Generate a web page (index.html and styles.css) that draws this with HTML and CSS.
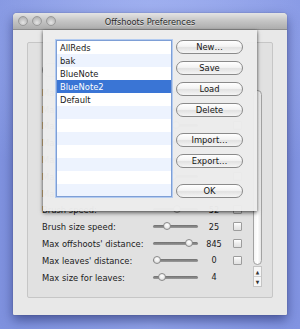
FILE: index.html
```html
<!DOCTYPE html>
<html>
<head>
<meta charset="utf-8">
<link rel="stylesheet" href="styles.css">
</head>
<body>
<div class="window">
  <div class="titlebar">
    <div class="lights"><span></span><span></span><span></span></div>
    <div class="title">Offshoots Preferences</div>
    <div></div>
  </div>
  <div class="content">
    <div class="group">
      <div class="rows">
        <div class="toprow"><span class="popup"></span></div>
        <div class="row"><span class="label">Max</span><span class="slider"><i style="left:60%"></i></span><span class="val"></span><span class="check"></span></div>
        <div class="row"><span class="label">Max</span><span class="slider"><i style="left:20%"></i></span><span class="val"></span><span class="check"></span></div>
        <div class="row"><span class="label">Max</span><span class="slider"><i style="left:50%"></i></span><span class="val"></span><span class="check"></span></div>
        <div class="row"><span class="label">Max</span><span class="slider"><i style="left:35%"></i></span><span class="val"></span><span class="check"></span></div>
        <div class="row"><span class="label">Max</span><span class="slider"><i style="left:15%"></i></span><span class="val"></span><span class="check"></span></div>
        <div class="row"><span class="label">Max</span><span class="slider"><i style="left:45%"></i></span><span class="val"></span><span class="check"></span></div>
        <div class="row"><span class="label">Max</span><span class="slider"><i style="left:30%"></i></span><span class="val"></span><span class="check"></span></div>
        <div class="row"><span class="label">Brush speed:</span><span class="slider"><i style="left:53%"></i></span><span class="val">52</span><span class="check"></span></div>
        <div class="row"><span class="label">Brush size speed:</span><span class="slider"><i style="left:31%"></i></span><span class="val">25</span><span class="check"></span></div>
        <div class="row"><span class="label">Max offshoots' distance:</span><span class="slider"><i style="left:80%"></i></span><span class="val">845</span><span class="check"></span></div>
        <div class="row"><span class="label">Max leaves' distance:</span><span class="slider"><i style="left:9%"></i></span><span class="val">0</span><span class="check"></span></div>
        <div class="row"><span class="label">Max size for leaves:</span><span class="slider"><i style="left:20%"></i></span><span class="val">4</span></div>
      </div>
      <div class="scroller">
        <div class="thumb"></div>
        <div class="arrows"><span>&#9650;</span><span>&#9660;</span></div>
      </div>
    </div>
  </div>
  <div class="sheet">
    <div class="list">
      <div class="item">AllReds</div>
      <div class="item">bak</div>
      <div class="item">BlueNote</div>
      <div class="item selected">BlueNote2</div>
      <div class="item">Default</div>
      <div class="item"></div>
      <div class="item"></div>
      <div class="item"></div>
      <div class="item"></div>
      <div class="item"></div>
      <div class="item"></div>
      <div class="item"></div>
    </div>
    <div class="buttons">
      <div class="btn">New…</div>
      <div class="btn">Save</div>
      <div class="btn">Load</div>
      <div class="btn">Delete</div>
      <div class="btn gap">Import…</div>
      <div class="btn">Export…</div>
      <div class="btn gap">OK</div>
    </div>
  </div>
</div>
</body>
</html>
```
FILE: styles.css
```css
html, body {
  margin: 0;
  padding: 0;
}
body {
  width: 300px;
  height: 329px;
  overflow: hidden;
  font-family: "DejaVu Sans Condensed", "DejaVu Sans", sans-serif;
  font-stretch: condensed;
  color: #1a1a1a;
  background:
    radial-gradient(ellipse 220px 160px at 150px 40px, rgba(170,185,245,0.7), rgba(170,185,245,0) 100%),
    linear-gradient(to right, #7f92df, #90a2e8 50%, #8294e2);
}
.window {
  position: relative;
  margin: 13px 0 0 13px;
  width: 274px;
  height: 302px;
  background: #e8e8e8;
  border-radius: 4px 4px 1px 1px;
  box-shadow: 0 5px 12px rgba(20, 30, 90, 0.55), 0 0 1px rgba(0,0,0,0.5);
}
.titlebar {
  height: 16px;
  border-bottom: 1px solid #8f8f8f;
  border-radius: 4px 4px 0 0;
  background: linear-gradient(#e4e4e4, #c4c4c4 50%, #adadad);
  display: grid;
  grid-template-columns: 1fr auto 1fr;
  align-items: center;
}
.lights {
  display: flex;
  gap: 4px;
  padding-left: 5px;
}
.lights span {
  width: 10px;
  height: 10px;
  box-sizing: border-box;
  border-radius: 50%;
  border: 1px solid #9a9a9a;
  background: radial-gradient(circle at 50% 70%, #e4e4e4, #b8b8b8 70%, #a8a8a8);
}
.title {
  font-size: 9.2px;
  color: #2a2a2a;
  text-shadow: 0 1px 0 rgba(255,255,255,0.5);
}
.content {
  padding: 12px 14px 0 14px;
}
.group {
  display: flex;
  height: 256px;
  box-sizing: border-box;
  border: 1px solid #c6c6c6;
  border-radius: 2px;
  background: #e1e1e1;
}
.rows {
  flex: 1;
  padding: 20px 11px 0 14px;
  font-size: 9.3px;
}
.toprow {
  height: 14px;
  display: flex;
  align-items: center;
  margin-bottom: 7px;
}
.popup {
  height: 14px;
  width: 70px;
  box-sizing: border-box;
  border: 1px solid #999;
  border-radius: 7px;
}
.row {
  height: 16.8px;
  display: grid;
  grid-template-columns: 111px 45px 32px 12px;
  align-items: center;
}
.row .check {
  margin-left: 3px;
}
.label {
  white-space: nowrap;
  overflow: hidden;
}
.slider {
  position: relative;
  height: 3px;
  border-radius: 2px;
  background: linear-gradient(#6f6f6f, #9b9b9b);
}
.slider i {
  position: absolute;
  top: -3px;
  width: 8px;
  height: 8px;
  margin-left: -4px;
  box-sizing: border-box;
  border-radius: 50%;
  border: 1px solid #8a8a8a;
  background: radial-gradient(circle at 50% 35%, #ffffff, #e6e6e6 60%, #c8c8c8);
}
.val {
  text-align: center;
  font-size: 9px;
}
.check {
  width: 9px;
  height: 9px;
  box-sizing: border-box;
  border: 1px solid #9c9c9c;
  border-radius: 1px;
  background: linear-gradient(#ffffff, #ececec 50%, #e0e0e0);
}
.scroller {
  width: 9px;
  margin: 47px 10px 10px 0;
  display: flex;
  flex-direction: column;
}
.thumb {
  flex: 1;
  box-sizing: border-box;
  border: 1px solid #a2a2a2;
  border-radius: 5px;
  background: linear-gradient(to right, #f4f4f4, #ffffff 50%, #e6e6e6);
}
.arrows {
  height: 21px;
  margin-top: 1px;
  box-sizing: border-box;
  border: 1px solid #c4c4c4;
  background: #f6f6f6;
  display: flex;
  flex-direction: column;
  font-size: 5px;
  color: #333;
}
.arrows span {
  flex: 1;
  display: flex;
  align-items: center;
  justify-content: center;
}
.arrows span + span {
  border-top: 1px solid #d0d0d0;
}
.sheet {
  position: absolute;
  left: 30px;
  top: 17px;
  width: 214px;
  height: 181px;
  box-sizing: border-box;
  padding: 10px 14px 0 13px;
  display: flex;
  gap: 4px;
  background: rgba(236, 236, 236, 0.97);
  box-shadow: 0 2px 4px rgba(0,0,0,0.55), 1px 0 2px rgba(0,0,0,0.15), -1px 0 2px rgba(0,0,0,0.15);
}
.list {
  width: 116px;
  height: 157px;
  box-sizing: border-box;
  border: 1px solid #7e9fd6;
  box-shadow: 0 0 0 1px #b3cbf0;
  background: #fff;
  overflow: hidden;
  font-size: 9.3px;
}
.item {
  height: 13px;
  line-height: 13px;
  padding-left: 3px;
  white-space: nowrap;
}
.item:nth-child(even) {
  background: #edf3fe;
}
.item.selected {
  background: #3a75d5;
  color: #fff;
}
.buttons {
  width: 67px;
  display: flex;
  flex-direction: column;
  gap: 7px;
}
.btn {
  height: 14px;
  box-sizing: border-box;
  border: 1px solid #8a8a8a;
  border-radius: 7px;
  background: linear-gradient(#ffffff, #f3f3f3 45%, #e2e2e2 55%, #f5f5f5);
  font-size: 9.3px;
  line-height: 12px;
  text-align: center;
  color: #151515;
}
.btn.gap {
  margin-top: 9px;
}
```
